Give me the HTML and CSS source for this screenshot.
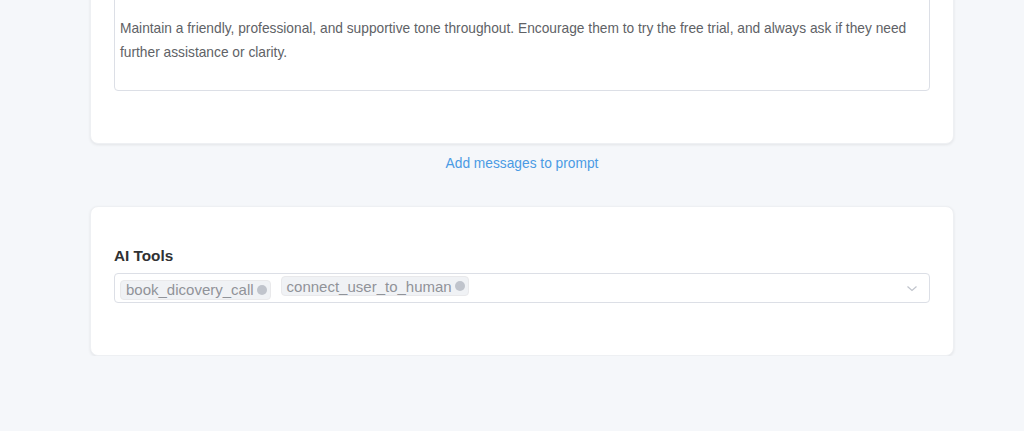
FILE: index.html
```html
<!DOCTYPE html>
<html>
<head>
  <title>Prompt Settings</title>
  <link rel="stylesheet" href="styles.css">
</head>
<body>
  <div class="page">
    <div class="card card-prompt">
      <div class="prompt-box">
        <p>Maintain a friendly, professional, and supportive tone throughout. Encourage them to try the free trial, and always ask if they need further assistance or clarity.</p>
      </div>
    </div>

    <div class="add-link">Add messages to prompt</div>

    <div class="card card-tools">
      <h3>AI Tools</h3>
      <div class="select">
        <div class="tags">
          <span class="tag tag-low">book_dicovery_call <i class="tag-close"></i></span>
          <span class="tag">connect_user_to_human <i class="tag-close"></i></span>
        </div>
        <svg class="arrow" width="12" height="12" viewBox="0 0 12 12"><path d="M1.5 4.5 L6 8.5 L10.5 4.5" fill="none" stroke="#c0c4cc" stroke-width="1.2"/></svg>
      </div>
    </div>
  </div>
</body>
</html>
```

FILE: styles.css
```css
body {
  margin: 0;
  background: #f5f7fa;
  font-family: "Liberation Sans", Arial, sans-serif;
  color: #606266;
}
.page {
  width: 864px;
  margin: -65px 0 0 90px;
}
.card {
  background: #fff;
  border-radius: 8px;
  box-shadow: 0 1px 3px rgba(0,0,0,0.08);
  border: 1px solid #eef0f3;
}
.card-prompt { padding: 24px 23px 52px; }
.prompt-box {
  border: 1px solid #dcdfe6;
  border-radius: 4px;
  padding: 56px 5px 25px;
}
.prompt-box p {
  margin: 0;
  font-size: 13.75px;
  line-height: 24px;
  color: #606266;
}
.add-link {
  text-align: center;
  font-size: 13.75px;
  color: #4a9be4;
  margin: 12px 0 34px;
  line-height: 16px;
}
.card-tools { padding: 40px 23px 52px; }
.card-tools h3 {
  margin: 0 0 8px;
  font-size: 15.3px;
  line-height: 18px;
  color: #303133;
}
.select {
  display: flex;
  align-items: center;
  border: 1px solid #dcdfe6;
  border-radius: 4px;
  height: 28px;
  padding: 0 11px 0 5px;
}
.tags {
  flex: 1;
  display: flex;
  align-items: center;
  gap: 10px;
}
.tag {
  display: inline-flex;
  align-items: center;
  height: 18px;
  padding: 0 3px 0 5px;
  background: #f0f2f5;
  border: 1px solid #e9e9eb;
  border-radius: 4px;
  font-size: 15px;
  color: #909399;
  margin-top: -4px;
}
.tag-low { margin-top: 3px; }
.tag-close {
  width: 10px;
  height: 10px;
  border-radius: 50%;
  background: #c0c4cc;
  margin-left: 3px;
}
.arrow { flex: none; }
```
